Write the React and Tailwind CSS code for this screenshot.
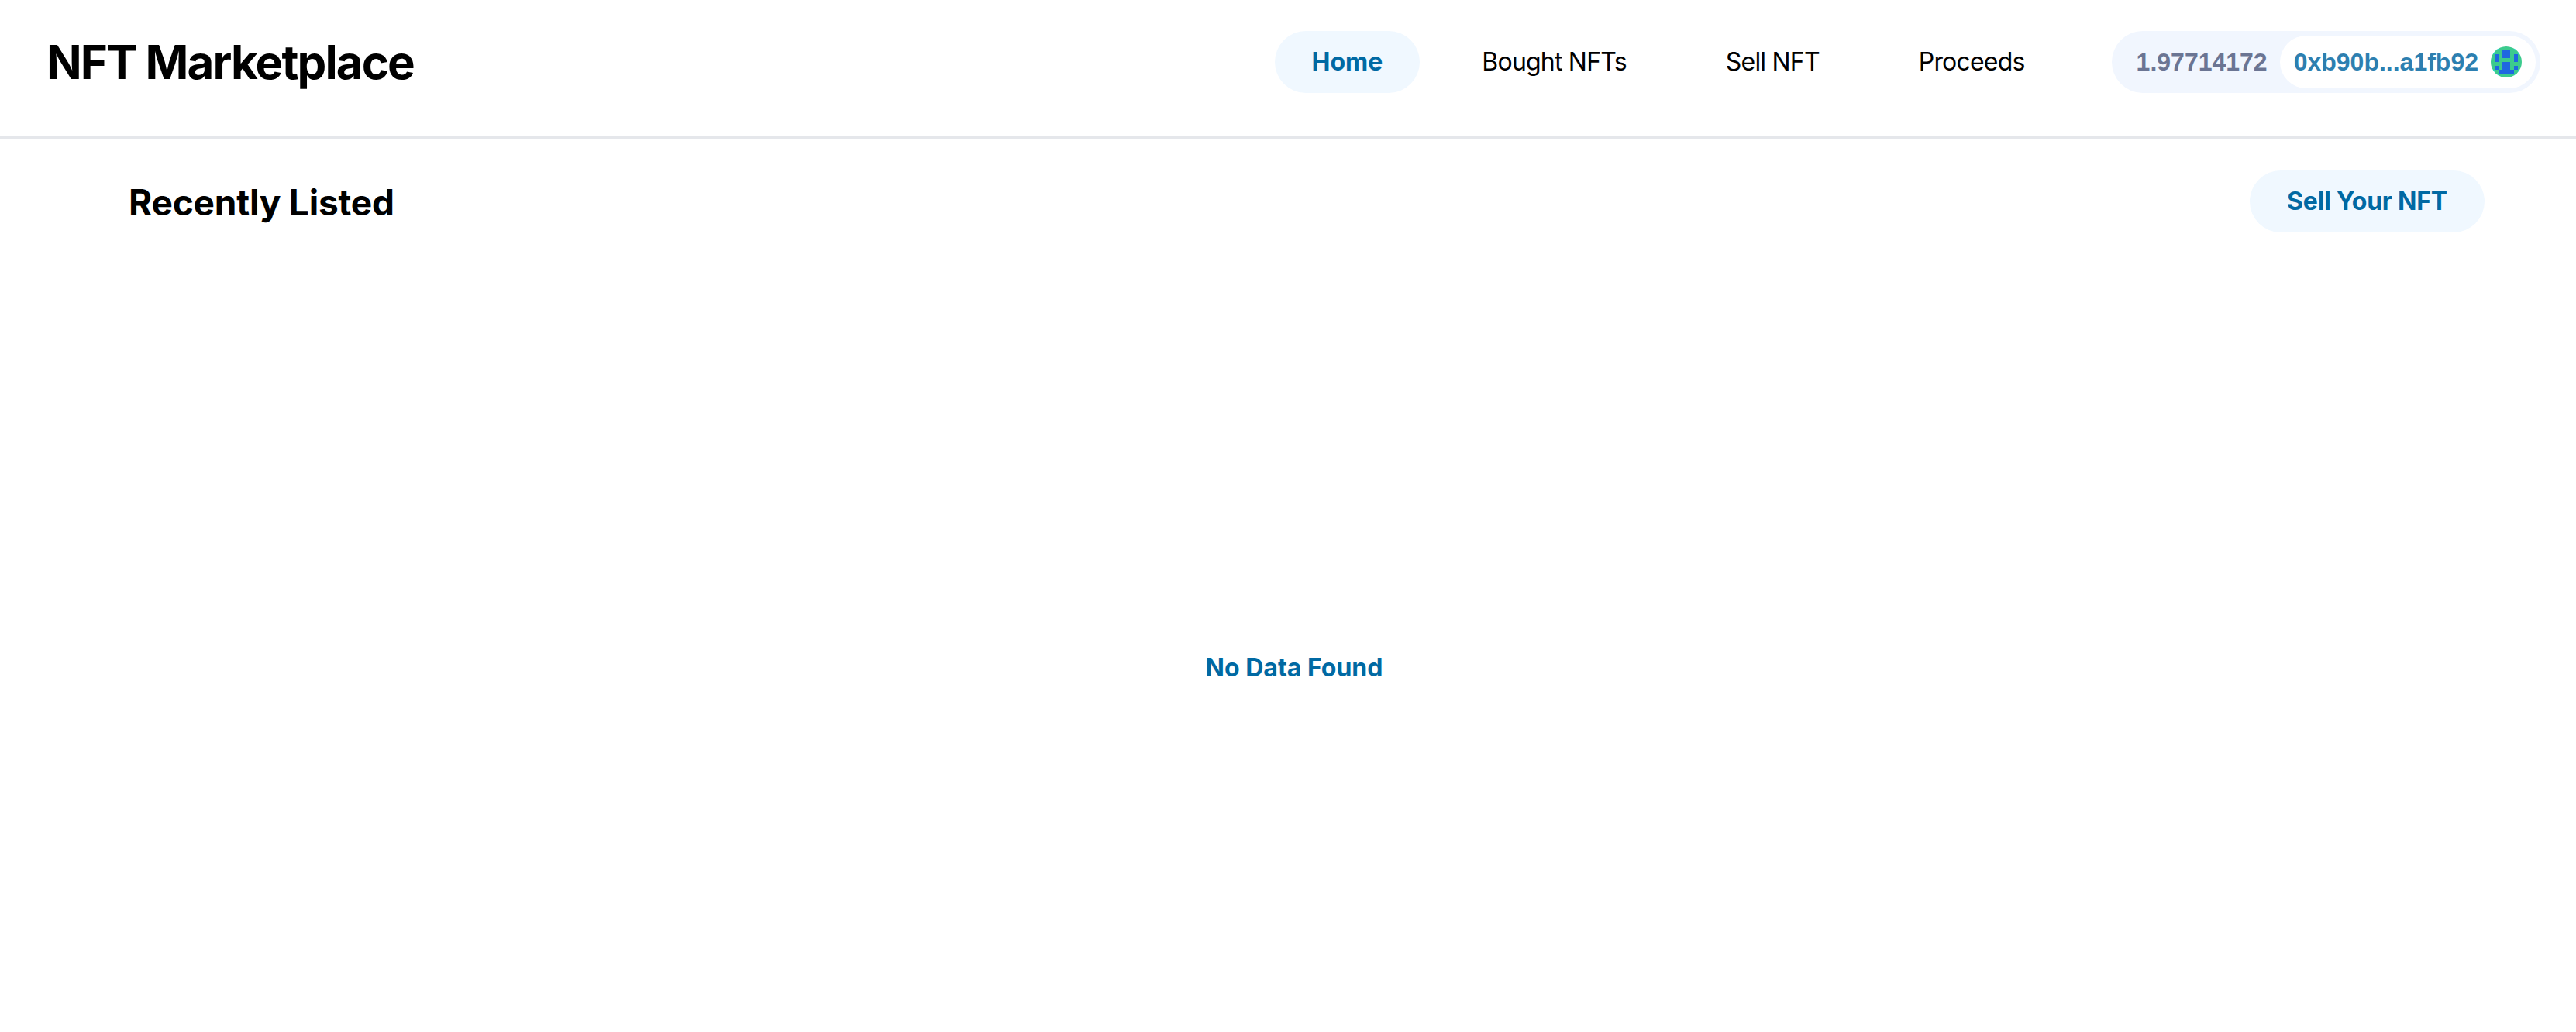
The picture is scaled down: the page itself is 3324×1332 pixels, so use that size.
import React from 'react';

const inter = 'font-["Inter",sans-serif]';

// blockie style avatar, 8x8 cells mirrored on the vertical axis
const cells = [
	'ttggggtt',
	'tggbbggt',
	'gbgbbgbg',
	'gbggggbg',
	'gggbbggg',
	'gbgbbgbg',
	'tgbbbbgt',
	'ttggggtt',
];
const cellColors = { t: '#27d3c0', g: '#3ccb8e', b: '#1f68e0' };

const Avatar = () => (
	<svg width="40" height="40" viewBox="0 0 8 8" className="rounded-full shrink-0 blur-[0.6px]">
		{cells.map((row, y) =>
			row.split('').map((c, x) => (
				<rect key={`${x}-${y}`} x={x} y={y} width="1.02" height="1.02" fill={cellColors[c]} />
			))
		)}
	</svg>
);

const NavLink = ({ label, active }) => (
	<a
		className={
			active
				? 'flex items-center h-20 px-12 rounded-[40px] bg-[#f0f8ff] text-[#0069a3] font-bold'
				: 'flex items-center h-20 px-12 rounded-[40px] text-black font-normal tracking-[-0.8px]'
		}
	>
		{label}
	</a>
);

const App = () => {
	return (
		<div className={`min-h-screen bg-white ${inter}`}>
			<header className="flex items-center justify-between h-[180px] pb-4 pl-[60px] pr-[46px] border-b-4 border-[#e5e7eb]">
				<h1 className="text-[60px] leading-none font-bold text-black tracking-[-1.9px]">NFT Marketplace</h1>
				<div className="flex items-center">
					<nav className="flex items-center gap-8 text-[32px] leading-none">
						<NavLink label="Home" active />
						<NavLink label="Bought NFTs" />
						<NavLink label="Sell NFT" />
						<NavLink label="Proceeds" />
					</nav>
					<div className='flex items-center h-20 ml-16 rounded-[40px] bg-[#f1f6fe] font-["Liberation_Sans",sans-serif] font-bold text-[32px] leading-none'>
						<span className="pl-8 pr-4 text-[#6b7593]">1.97714172</span>
						<div className="flex items-center h-[68px] mr-1.5 pl-[18px] pr-[18px] gap-4 rounded-[34px] bg-white text-[#2d7fb0]">
							<span>0xb90b...a1fb92</span>
							<Avatar />
						</div>
					</div>
				</div>
			</header>
			<main>
				<div className="flex items-center justify-between pt-10 pl-[166px] pr-[118px]">
					<h2 className="pt-0.5 text-[46px] leading-none font-bold text-black tracking-[-0.2px]">Recently Listed</h2>
					<button className="flex items-center h-20 px-12 rounded-[40px] bg-[#f0f8ff] text-[#0069a3] text-[32px] leading-none font-bold tracking-[-0.2px]">
						Sell Your NFT
					</button>
				</div>
				<div className="flex justify-center pt-[542px] pl-4">
					<p className="text-[32px] leading-10 font-bold text-[#0069a3]">No Data Found</p>
				</div>
			</main>
		</div>
	);
};

export default App;
